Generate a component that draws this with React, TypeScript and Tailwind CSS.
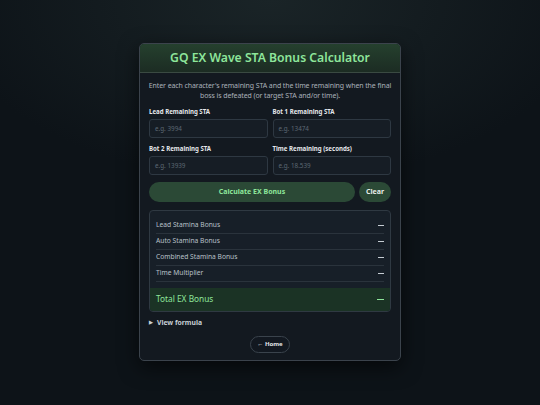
import React from "react";

function Field({ label, placeholder }: { label: string; placeholder: string }) {
  return (
    <div className="flex flex-col">
      <label className="text-[6.1px] font-bold text-[#e5e7eb] leading-[9px] mb-[3px]">{label}</label>
      <div className="h-[19px] rounded-[3px] border border-[#2e3842] bg-[#161d25] px-[5px] flex items-center text-[6.3px] text-[#5d6873]">
        {placeholder}
      </div>
    </div>
  );
}

function Row({ label }: { label: string }) {
  return (
    <div className="flex items-center justify-between h-[16px] border-b border-[#2a333c] text-[6.7px] text-[#b9c1c9]">
      <span>{label}</span>
      <span className="w-[6px] h-[1px] border-t-[1.5px] border-[#c5ccd3]" />
    </div>
  );
}

export default function App() {
  return (
    <div
      className="w-[540px] h-[405px] overflow-hidden flex justify-center bg-[radial-gradient(ellipse_60%_45%_at_50%_0%,#1a2427,#0d1318_100%)] bg-[#0d1318]"
      style={{ fontFamily: '"Noto Sans", "Open Sans", sans-serif' }}
    >
      <div className="mt-[43px] w-[262px] h-[318px] rounded-[5px] border border-[#3b434c] bg-[#131920] shadow-[0_6px_20px_rgba(0,0,0,0.6)] overflow-hidden flex flex-col">
        <div className="h-[29px] flex items-center justify-center bg-[linear-gradient(180deg,#25402e,#1c2c23)] border-b border-[#3a4a42]">
          <h1 className="text-[12.2px] font-semibold text-[#8ee69b] leading-none">GQ EX Wave STA Bonus Calculator</h1>
        </div>
        <div className="px-[9px] flex flex-col">
          <p className="mt-[8px] -mx-[5px] text-center text-[7px] tracking-[-0.1px] leading-[10px] text-[#aab2ba]">
            Enter each character's remaining STA and the time remaining when the final boss is defeated (or target STA and/or time).
          </p>
          <div className="mt-[6px] grid grid-cols-2 gap-x-[5px] gap-y-[6px]">
            <Field label="Lead Remaining STA" placeholder="e.g. 3994" />
            <Field label="Bot 1 Remaining STA" placeholder="e.g. 13474" />
            <Field label="Bot 2 Remaining STA" placeholder="e.g. 13939" />
            <Field label="Time Remaining (seconds)" placeholder="e.g. 18.539" />
          </div>
          <div className="mt-[7px] flex gap-[4px]">
            <div className="flex-1 h-[20px] rounded-full bg-[#2b4936] flex items-center justify-center text-[7px] font-bold text-[#8ee69b]">
              Calculate EX Bonus
            </div>
            <div className="w-[32px] h-[20px] rounded-full bg-[#2b4936] flex items-center justify-center text-[7px] font-bold text-[#e8ece9]">
              Clear
            </div>
          </div>
          <div className="mt-[8px] rounded-[4px] border border-[#2f3942] bg-[#171f28] overflow-hidden">
            <div className="px-[6px] pt-[7px] pb-[6px]">
              <Row label="Lead Stamina Bonus" />
              <Row label="Auto Stamina Bonus" />
              <Row label="Combined Stamina Bonus" />
              <Row label="Time Multiplier" />
            </div>
            <div className="h-[23px] bg-[#1b3325] px-[6px] flex items-center justify-between">
              <span className="text-[8.3px] text-[#8ee69b]">Total EX Bonus</span>
              <span className="w-[7px] h-[1px] border-t-[1.5px] border-[#8ee69b]" />
            </div>
          </div>
          <div className="mt-[6px] flex items-center gap-[4px] text-[6.8px] font-bold text-[#c8cfd6]">
            <span className="text-[5px]">▶</span>
            <span>View formula</span>
          </div>
          <div className="mt-[8px] flex justify-center">
            <div className="h-[17px] px-[6px] rounded-full border border-[#3a434c] bg-[#121820] flex items-center text-[6px] font-bold text-[#e5e7eb]">
              ← Home
            </div>
          </div>
        </div>
      </div>
    </div>
  );
}
